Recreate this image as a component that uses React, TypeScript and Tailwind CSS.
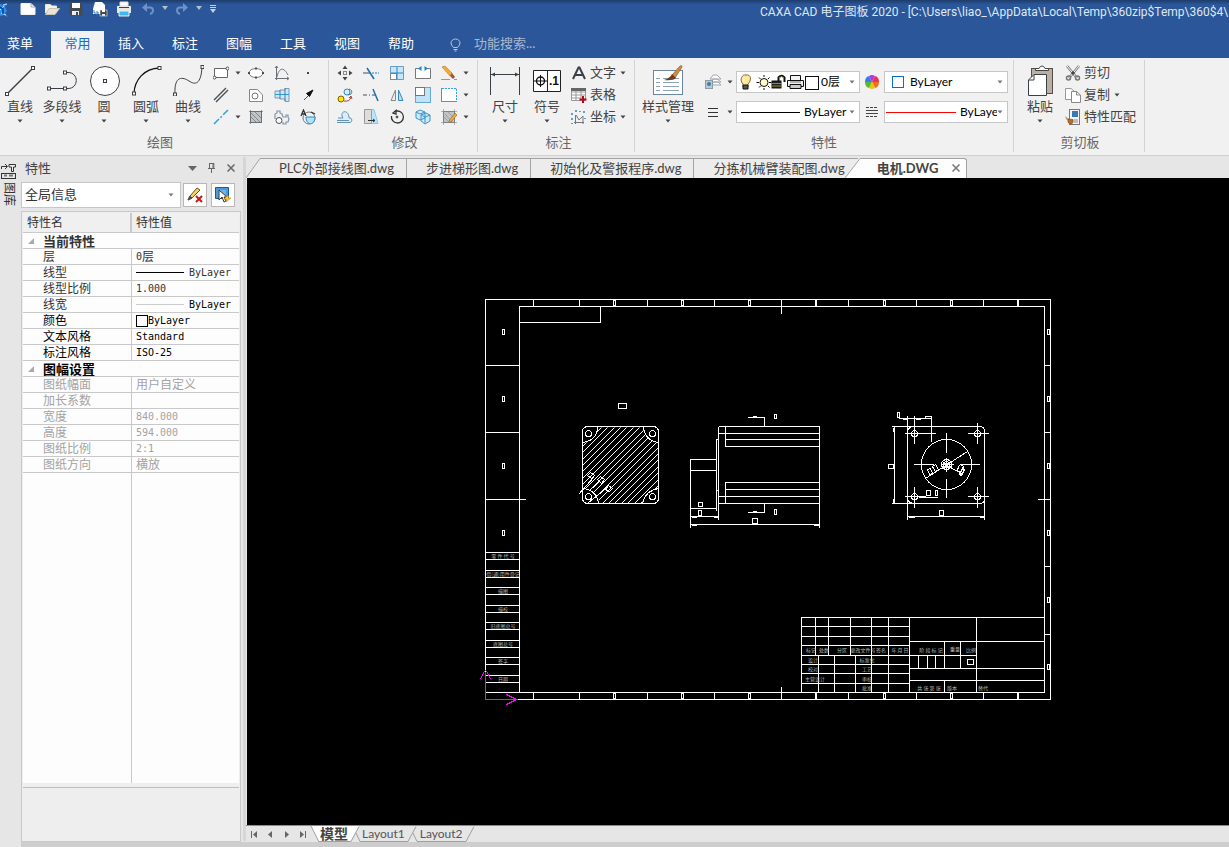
import React from "react";
import type { ReactNode } from "react";

const ui = "font-['Lato','Noto_Sans_CJK_SC',sans-serif]";

function Icon({ children, label, size = 16 }: { children: ReactNode; label?: string; size?: number }) {
  return (
    <svg width={size} height={size} viewBox={`0 0 ${size} ${size}`} fill="none" stroke="#4a4f57" aria-label={label} className="block shrink-0">
      {children}
    </svg>
  );
}

function Caret({ light = false }: { light?: boolean }) {
  return (
    <svg width="6" height="4" viewBox="0 0 6 4" className="block shrink-0">
      <path d="M.5 .5H5.5L3 3.5Z" fill={light ? "#777" : "#444"} />
    </svg>
  );
}

const node = (x: number, y: number) => <rect x={x - 1.5} y={y - 1.5} width="3" height="3" fill="#fff" stroke="#3b3f46" />;

/* ---------- quick access bar ---------- */

function QuickBar() {
  const b = "flex h-[18px] w-6 items-center justify-center";
  return (
    <div className="flex shrink-0 items-start">
      <button aria-label="CAXA" className="h-5 w-4">
        <svg width="9" height="16" viewBox="0 0 9 16" className="block">
          <path d="M0 2L3 3 7 1 5 5 7 9 5 11 8 15 4 13 0 14Z" fill="#2f8fe8" />
          <path d="M0 8L4 4M1 11L6 13M3 3L7 2" stroke="#bfe1ff" fill="none" />
          <path d="M0 5L3 7V12" stroke="#0b3f93" fill="none" strokeWidth="1.5" />
        </svg>
      </button>
      <button aria-label="新建" className={b}>
        <Icon><path d="M1 2.500H11L15 6.500V13.500H1Z" fill="#fff" stroke="#f3f3f3" /><path d="M11 2V6H15" stroke="#aaa" /></Icon>
      </button>
      <button aria-label="打开" className={b}>
        <Icon><path d="M1.500 12V3.500H6L8 5H12.500V7" fill="#f5f2ea" stroke="#ece8df" /><path d="M1.500 13.500L5 7.500H15.500L11 13.500Z" fill="#e8e4da" stroke="#c9c5bb" /></Icon>
      </button>
      <button aria-label="保存" className={b}>
        <Icon><path d="M2 2H14V14H3L2 13Z" fill="#454a52" stroke="#454a52" /><rect x="4" y="2" width="8" height="5" fill="#fff" stroke="none" /><rect x="4" y="10" width="7" height="4" fill="#e8eef5" stroke="none" /><rect x="8" y="11" width="2" height="3" fill="#454a52" stroke="none" /></Icon>
      </button>
      <button aria-label="另存为" className={b}>
        <Icon><path d="M3 1H10L13 4V13H1V8Z" fill="#fff" stroke="none" /><path d="M2 9V12H6M4.500 10L6.500 12L4.500 14" stroke="#3478bd" /><rect x="8" y="9" width="7" height="6" fill="#454a52" stroke="#fff" strokeWidth=".5" /><rect x="10" y="9" width="3" height="2" fill="#fff" stroke="none" /><rect x="10" y="13" width="3" height="2" fill="#dce8f3" stroke="none" /></Icon>
      </button>
      <button aria-label="打印" className={b}>
        <Icon><path d="M4 1H12V5H4Z" fill="#fff" stroke="#ddd" /><path d="M1 5H15V12H1Z" fill="#e6e6e6" stroke="none" /><path d="M3 6.500H13" stroke="#444" /><path d="M3 10H13V15H3Z" fill="#3db9ee" stroke="#eee" /></Icon>
      </button>
      <button aria-label="撤销" className={b}>
        <Icon><path d="M2 6.500L7 2V11Z" fill="#6f91c8" stroke="none" /><path d="M5 6.500H10Q13 6.500 13 9.500Q13 12 10 13" stroke="#6f91c8" strokeWidth="2" /></Icon>
      </button>
      <button aria-label="撤销列表" className="flex h-4 w-[10px] items-center justify-center"><svg width="6" height="4"><path d="M0 0H6L3 4Z" fill="#b7bdc9" /></svg></button>
      <button aria-label="重做" className={b}>
        <Icon><path d="M14 6.500L9 2V11Z" fill="#6f91c8" stroke="none" /><path d="M11 6.500H6Q3 6.500 3 9.500Q3 12 6 13" stroke="#6f91c8" strokeWidth="2" /></Icon>
      </button>
      <button aria-label="重做列表" className="flex h-4 w-[10px] items-center justify-center"><svg width="6" height="4"><path d="M0 0H6L3 4Z" fill="#b7bdc9" /></svg></button>
      <button aria-label="自定义" className="flex h-[18px] w-[18px] items-center justify-center"><svg width="6" height="8"><path d="M0 .5H6M0 2.500H6" stroke="#c9ced8" /><path d="M0 4H6L3 8Z" fill="#c9ced8" /></svg></button>
    </div>
  );
}

/* ---------- ribbon building blocks ---------- */

function Section({ title, className, children }: { title: string; className: string; children: ReactNode }) {
  return (
    <section className={`flex h-[92px] shrink-0 flex-col border-r border-[#d3d3d3] ${className}`}>
      <div className="flex h-[72px]">{children}</div>
      <h2 className="text-center leading-5 text-[#666]">{title}</h2>
    </section>
  );
}

function Big({ label, width = "w-10", arrow = true, children }: { label: string; width?: string; arrow?: boolean; children: ReactNode }) {
  return (
    <button className={`flex shrink-0 flex-col items-center pt-1 ${width}`}>
      <svg width="32" height="32" viewBox="0 0 32 32" fill="none" stroke="#3b3f46" className="block">{children}</svg>
      <span className="mt-[2px] mb-px leading-4 whitespace-nowrap">{label}</span>
      <span className="flex h-3 items-center">{arrow && <Caret />}</span>
    </button>
  );
}

function Tool({ name, children }: { name: string; children: ReactNode }) {
  return <button aria-label={name} className="flex items-center justify-center"><Icon>{children}</Icon></button>;
}

function Drop({ name }: { name: string }) {
  return <button aria-label={name} className="flex items-center justify-center"><Caret /></button>;
}

function TextTool({ label, arrow, children }: { label: string; arrow?: boolean; children: ReactNode }) {
  return (
    <button className="flex h-[22px] items-center gap-[3px] whitespace-nowrap">
      <Icon>{children}</Icon>
      <span className="pb-[2px]">{label}</span>
      {arrow && <span className="pl-px"><Caret /></span>}
    </button>
  );
}

function Combo({ label, value, before }: { label: string; value: string; before: ReactNode }) {
  return (
    <label className="flex h-[22px] w-[124px] items-center border border-[#c6c6c6] bg-white pr-1 text-[12px] text-black">
      {before}
      <select aria-label={label} className="min-w-0 flex-1 appearance-none bg-transparent outline-none">
        <option>{value}</option>
      </select>
      <Caret light />
    </label>
  );
}

function DrawSection() {
  return (
    <Section title="绘图" className="w-[329px] pr-2">
      <Big label="直线"><path d="M3 30L29 4" strokeWidth="1.500" />{node(3, 30)}{node(29, 4)}</Big>
      <Big label="多段线" width="w-11"><path d="M3 24.500H19H22C33 24.500 33 8.500 22 8.500H19" />{node(3, 24.5)}{node(19, 24.5)}{node(19, 8.5)}</Big>
      <Big label="圆"><circle cx="17" cy="17" r="14.500" fill="#fff" />{node(17, 17)}</Big>
      <Big label="圆弧" width="w-11"><path d="M4 29.500C4.500 16 14 4.500 29.500 4" stroke="#111" strokeWidth="1.300" />{node(4, 29.5)}{node(29.5, 4)}</Big>
      <Big label="曲线"><path d="M3 30C2 11 11 13 17 17C23 21 29 21 30 3" />{node(3, 30.5)}{node(30.5, 3)}</Big>
      <div className="grid auto-rows-[22px] grid-cols-[25px_10px_26px_26px_26px] pt-[2px]">
        <Tool name="矩形"><path d="M1.500 3.500H14.500V12.500H1.500Z" fill="#fff" stroke="#666" />{[[1.5, 12.5], [14.5, 3.5]].map(([x, y]) => <circle key={x} cx={x} cy={y} r="1.500" fill="#fff" />)}</Tool>
        <Drop name="矩形选项" />
        <Tool name="椭圆"><ellipse cx="8" cy="8" rx="7" ry="4.500" fill="#fff" stroke="#777" /><path d="M1 7v2M15 7v2M7 3.500h2M7 12.500h2" strokeWidth="2" /></Tool>
        <Tool name="公式曲线"><path d="M2.500 1V15M1 13.500H15M1 3L2.500 1L4 3M13 12L15 13.500L13 15M3 12C5 2 10 2 14 10" stroke="#6b7078" /></Tool>
        <Tool name="点"><rect x="7" y="7" width="2" height="2" fill="#444" stroke="none" /></Tool>

        <Tool name="平行线"><path d="M1 13L13 1M3 15L15 3" strokeWidth="1.400" /></Tool>
        <span />
        <Tool name="局部放大"><path d="M1.500 2.500H9.500L14.500 8V14.500H1.500Z" fill="#fff" stroke="#888" /><circle cx="7" cy="9" r="3" fill="#fff" stroke="#777" /></Tool>
        <Tool name="孔轴"><path d="M1 4H6V3H11V1.500H15V14.500H11V12H6V11H1Z" fill="#c8e7fa" stroke="#7d9bb3" /><path d="M1 7.500H15" stroke="#2b9be0" /><path d="M6 3V12M11 1V14" stroke="#567d9d" /></Tool>
        <Tool name="箭头"><path d="M4 13L9 8" /><path d="M13 3L6.500 6.500L9.500 9.500Z" fill="#111" stroke="#111" /></Tool>

        <Tool name="中心线"><path d="M1 15L15 1" stroke="#21a0db" strokeWidth="1.400" strokeDasharray="7 2 2 2" /></Tool>
        <Drop name="中心线选项" />
        <Tool name="填充"><rect x="2.500" y="2.500" width="11" height="11" fill="#c1c4c7" stroke="#6c7075" /><path d="M2.500 1V15M13.500 1V12M1 2.500H15M1 13.500H11M3 8L8 13M3 4L12 13M7 3L13 9" stroke="#6c7075" strokeWidth=".7" /></Tool>
        <Tool name="齿轮"><circle cx="5" cy="11.500" r="3" fill="#fff" /><path d="M1 10V5L3 4V2H6V4L8 5L9 8H12V6H14V8L15 10L14 13H12V15H9V13" stroke="#8196a8" strokeWidth="1.200" /></Tool>
        <Tool name="文字圆弧"><circle cx="9" cy="9" r="6" stroke="#777" /><path d="M6 8H15C15 17 6 17 6 8Z" fill="#b5e0fa" stroke="#3388b8" /><path d="M1 7L3.500 1L6 7M2 5H5M11 3L15 5" stroke="#333" strokeWidth="1.300" /></Tool>
      </div>
    </Section>
  );
}

function ModifySection() {
  return (
    <Section title="修改" className="w-[149px] pl-[3px]">
      <div className="grid auto-rows-[22px] grid-cols-[26px_26px_26px_26px_26px_8px] pt-[2px]">
        <Tool name="平移"><rect x="6.500" y="6.500" width="3" height="3" stroke="#888" /><path d="M8 2V4M8 12V14M2 8H4M12 8H14" /><path d="M8 .5L5.500 4H10.500ZM8 15.500L5.500 12H10.500ZM.5 8L4 5.500V10.500ZM15.500 8L12 5.500V10.500Z" fill="#444" stroke="none" /></Tool>
        <Tool name="裁剪"><path d="M0 8H7" /><path d="M9 8H16" stroke="#1287d3" strokeDasharray="2 1" /><path d="M4 3L11 14" stroke="#1670b5" strokeWidth="1.500" /></Tool>
        <Tool name="阵列"><path d="M1.500 1.500H14.500V14.500H1.500Z" fill="#c5e7fa" stroke="#6a9dbf" /><rect x="1.500" y="8.500" width="6" height="6" fill="#fff" stroke="#888" /><path d="M8 2V14M2 8H14" stroke="#2d88c2" /></Tool>
        <Tool name="打断"><path d="M4 3.500H.5V13.500H15.500V3.500H12" fill="#fff" stroke="#777" /><path d="M3 3.500L6.500 1V6ZM13 3.500L9.500 1V6Z" fill="#1687ce" stroke="none" /></Tool>
        <Tool name="删除"><path d="M1 2L4 1L11 8L9 11Z" fill="#f3ad35" stroke="#b46512" strokeWidth=".5" /><path d="M9 11L11 8L14 12L12 14Z" fill="#a45142" stroke="none" /><path d="M0 14.500H9M13 14.500H16" stroke="#999" /></Tool>
        <Drop name="删除选项" />

        <Tool name="平移复制"><circle cx="4" cy="12" r="3" fill="#ffe500" stroke="#786500" /><circle cx="10" cy="5" r="3" fill="#d3edfb" stroke="#3688b8" /><path d="M12 2A3 3 0 0 1 14 7L11 8" stroke="#3688b8" /><path d="M7 14Q13 15 14 10M12 11L14 9L15 12" stroke="#a3443b" /></Tool>
        <Tool name="延伸"><path d="M0 8H4M6 8H7M9 8H12" /><path d="M10 2L15 14" stroke="#1670b5" strokeWidth="1.500" /></Tool>
        <Tool name="镜像"><path d="M6.500 3V13.500H2Z" fill="#eee" stroke="#888" /><path d="M9.500 3V13.500H14Z" fill="#b4dff8" stroke="#3688b8" /></Tool>
        <Tool name="缩放"><rect x=".5" y=".5" width="15" height="15" fill="#bfe4fa" stroke="#6aa9cf" /><rect x=".5" y=".5" width="9" height="8" fill="#fff" stroke="#777" /></Tool>
        <Tool name="选择区域"><rect x=".5" y="1.500" width="15" height="13" fill="#fff" stroke="#888" /><path d="M1 1.500H15.500V14" stroke="#f1f1f1" /><path d="M1 1.500H15.500V14" stroke="#38a4dd" strokeDasharray="2 1" /></Tool>
        <Drop name="选择区域选项" />

        <Tool name="等距线"><path d="M0 13.500H13C16 13 15 8 12 9C12 1 4 1 5 7L6 9H1" fill="#d8effb" stroke="#6591ae" /><path d="M0 11.500H12" stroke="#6591ae" /></Tool>
        <Tool name="拉伸"><path d="M1.500 .5H8.500V14.500H1.500Z" fill="#ddd" stroke="#999" /><path d="M9 .5H11L15 14.500H9" fill="#bde4f9" stroke="#8cc8e8" /><path d="M5 11.500H12M10 10L12 11.500L10 13" stroke="#333" /></Tool>
        <Tool name="旋转"><path d="M6 2H8A6 6 0 1 1 2.500 7M4 4L7 1.500V5Z" stroke="#333" strokeWidth="1.300" /><circle cx="8" cy="8" r="1" fill="#333" /></Tool>
        <Tool name="分解"><path d="M1 3L5 1L10 3V9L5 11L1 9ZM6 6L11 4L15 6V12L10 15L6 12Z" fill="#cdeafa" stroke="#3c95c5" /><path d="M6 6L10 8L15 6M10 8V14M1 3L5 5L10 3" stroke="#3c95c5" /></Tool>
        <Tool name="编辑填充"><rect x="2.500" y="2.500" width="11" height="11" fill="#c1c4c7" stroke="#777" /><path d="M2.500 0V16M13.500 0V16M0 2.500H16M0 13.500H16M3 8L8 13M4 5L11 13M7 3L13 9" stroke="#888" strokeWidth=".6" /><path d="M8 12L14 4L16 6L10 13Z" fill="#f1ad36" stroke="#875d25" strokeWidth=".6" /></Tool>
        <Drop name="编辑填充选项" />
      </div>
    </Section>
  );
}

function NoteSection() {
  return (
    <Section title="标注" className="w-[157px] pl-[5px]">
      <Big label="尺寸" width="w-11"><path d="M1.500 3V31M30.500 3V31M2 10.500H30" /><path d="M2 10.500L6 8.500V12.500ZM30 10.500L26 8.500V12.500Z" fill="#3b3f46" stroke="none" /></Big>
      <Big label="符号">
        <path d="M2.500 6.500H29.500V27.500H2.500ZM16.500 6.500V27.500" fill="#fff" stroke="#222" />
        <circle cx="9.500" cy="17" r="4" stroke="#111" strokeWidth="1.400" /><path d="M3 17H16M9.500 11V23" stroke="#111" />
        <text x="18" y="21" fontSize="12" fontWeight="bold" fontFamily="Liberation Sans" fill="#111" stroke="none">.1</text>
      </Big>
      <div className="pt-[2px] pl-1">
        <TextTool label="文字" arrow><path d="M2 14L7.500 2.500H8.500L14 14M4.500 10H11.500" stroke="#3b3f46" strokeWidth="2" /></TextTool>
        <TextTool label="表格"><path d="M.5 1.500H14.500V13.500H.5ZM.5 5H14M.5 8H14M.5 11H10M5 4V13M10 4V13" fill="#fff" stroke="#999" /><path d="M0 1H15V4H0Z" fill="#666" stroke="none" /><path d="M12 9V16M8.500 12.500H15.500" stroke="#b30b18" strokeWidth="2" /></TextTool>
        <TextTool label="坐标" arrow><path d="M4.500 6V15M3 13.500H13M5 6L8 11L12 7V15" stroke="#777" /><path d="M1 4v2M5 1v2M9 2v1M13 2v2M1 9v2M1 14v1M14 9v1" stroke="#2486bd" strokeWidth="1.500" /></TextTool>
      </div>
    </Section>
  );
}

function LayerIcons() {
  return (
    <svg width="84" height="18" viewBox="0 0 84 18" fill="none" stroke="#111" className="block shrink-0">
      <path d="M6 11C2 7 5 1 9 2C14 1 15 7 11 11V14H6Z" fill="#ffe69a" stroke="#806a37" /><path d="M6 12H11V16H6Z" fill="#555" /><path d="M7 5V9" stroke="#fff" />
      <circle cx="27" cy="9.500" r="4" fill="#fff8c7" /><path d="M27 2V4M27 15V17M19.500 9.500H22M32 9.500H34.500M22 4.500L23.500 6M31 13L32.500 14.500M22 14.500L23.500 13M31 6L32.500 4.500" />
      <rect x="35" y="8" width="9" height="7" fill="#222" /><path d="M35 10.500H44M35 13H44" stroke="#938d26" /><path d="M41.500 8V4.500Q44.500 1 47.500 4.500V9" strokeWidth="2" /><path d="M42 5Q44.500 2 47 5" stroke="#938d26" />
      <path d="M53.500 7V2.500H63.500V7M50.500 7.500H66.500V13.500H50.500Z" fill="#f2f2f2" /><path d="M53 11.500H64V15.500H53Z" fill="#ccc" /><path d="M53 9H64" stroke="#777" />
      <rect x="68.500" y="3.500" width="13" height="13" fill="#fff" />
    </svg>
  );
}

function PropertySection() {
  return (
    <Section title="特性" className="w-[379px]">
      <Big label="样式管理" width="w-[66px]">
        <rect x="1.500" y="6.500" width="29" height="24" fill="#fff" stroke="#6c87a3" />
        <path d="M4 14.500H8M4 18.500H8M4 22.500H8M4 26.500H8M11 14.500H27M11 18.500H27M11 22.500H27M11 26.500H27" stroke="#8ba2b9" />
        <path d="M20 11L27 3Q30 0 30 3L23 14Z" fill="#ce8b45" stroke="#995a25" strokeWidth=".7" /><path d="M20 10L24 14Q21 17 12 16Q18 14 20 10Z" fill="#6a4025" stroke="none" />
      </Big>
      <div className="flex flex-col gap-2 pt-[11px] pl-1">
        <div className="flex items-center">
          <Tool name="图层"><path d="M5 5L8 1H12L16 5H9ZM5 7L9 5H12L16 8H9ZM6 10L9 8H13L16 11H9Z" fill="#fff" stroke="#a3a8ae" /><rect x=".5" y="6.500" width="7" height="8" fill="#b7c8d6" stroke="#8c9ba6" /><circle cx="4" cy="10" r="2" fill="#3e7ba2" stroke="none" /></Tool>
          <button aria-label="图层选项" className="flex w-[15px] justify-center pl-[3px]"><Caret /></button>
          <Combo label="图层" value="0层" before={<LayerIcons />} />
          <button aria-label="颜色" className="flex w-6 justify-center">
            <svg width="14" height="14" viewBox="-7 -7 14 14" className="block">
              <path d="M0 0L-3 -6Q0 -8 3 -6Z" fill="#b934e2" /><path d="M0 0L3 -6Q7 -5 7 0Z" fill="#f43050" /><path d="M0 0H7Q7 5 3 6Z" fill="#f26b22" /><path d="M0 0L3 6Q0 8 -3 6Z" fill="#eac30d" /><path d="M0 0L-3 6Q-7 5 -7 0Z" fill="#56ba32" /><path d="M0 0H-7Q-7 -5 -3 -6Z" fill="#3a79ee" />
            </svg>
          </button>
          <Combo label="颜色" value="ByLayer" before={<span className="mr-[6px] ml-[7px] h-3 w-3 shrink-0 border border-[#0870cc]" />} />
        </div>
        <div className="flex items-center">
          <Tool name="线型"><path d="M3 4.500H13M3 8.500H13M3 12.500H13" stroke="#333" /></Tool>
          <button aria-label="线型选项" className="flex w-[15px] justify-center pl-[3px]"><Caret /></button>
          <Combo label="线型" value="ByLayer" before={<span className="mr-1 ml-1 h-px w-[59px] shrink-0 bg-black" />} />
          <button aria-label="线宽" className="flex w-6 justify-center"><Icon><path d="M2 3.500H14M2 12.500H14" stroke="#444" strokeDasharray="3 1" /><path d="M2 6.500H14M2 9.500H14" stroke="#444" /></Icon></button>
          <Combo label="线宽" value="ByLayer" before={<span className="mr-1 ml-px h-px w-[70px] shrink-0 bg-[#f00]" />} />
        </div>
      </div>
    </Section>
  );
}

function ClipboardSection() {
  return (
    <Section title="剪切板" className="w-[131px] pl-[2px]">
      <Big label="粘贴" width="w-12">
        <rect x="7.500" y="4.500" width="21" height="25" fill="#b9afa3" stroke="#554f49" /><path d="M11.500 6.500V4.500H15Q16 2 18 2Q20 2 21 4.500H24.500V6.500Z" fill="#fff" stroke="#444" /><path d="M4.500 16L10 10.500H22.500V31.500H4.500Z" fill="#fff" /><path d="M10 11V16H5" />
      </Big>
      <div className="pt-[2px] pl-px">
        <TextTool label="剪切"><path d="M2 1L12 13M14 1L4 13" stroke="#777" strokeWidth="2.500" /><path d="M2 1L12 13M14 1L4 13" stroke="#fff" /><circle cx="3.500" cy="13" r="2" stroke="#777" strokeWidth="1.500" /><circle cx="12.500" cy="13" r="2" stroke="#777" strokeWidth="1.500" /><path d="M6 8L8 6L10 8L8 10Z" fill="#444" stroke="none" /></TextTool>
        <TextTool label="复制" arrow><path d="M.5 1.500H6L9.500 4.500V12.500H.5Z" fill="#fff" stroke="#999" /><path d="M6.500 4.500H11.500L15.500 8V15.500H6.500Z" fill="#fff" stroke="#888" /><path d="M11.500 4.500V8H15" stroke="#888" /></TextTool>
        <TextTool label="特性匹配"><rect x="4.500" y=".5" width="10" height="15" fill="#f5f5f5" stroke="#777" /><rect x="7" y="2" width="6" height="6" fill="#3a79b4" stroke="none" /><path d="M9 11H13M9 13H13" stroke="#888" /><path d="M0 7L4 10Q2 12 1 10Z" fill="#c99a6a" stroke="none" /><path d="M3 10L8 10.500Q9 15 5 15Q2 14 3 10Z" fill="#b56d2b" stroke="#80451c" strokeWidth=".6" /></TextTool>
      </div>
    </Section>
  );
}

/* ---------- property panel ---------- */

type Row = { name: string; value?: ReactNode; tone: string };
const mono = "font-['DejaVu_Sans_Mono',monospace] text-[10px] leading-none";

const current: Row[] = [
  { name: "层", value: <><span className={mono}>0</span>层</>, tone: "text-[#333]" },
  { name: "线型", value: <><i className="mr-[5px] h-px w-12 bg-black" /><span className={mono}>ByLayer</span></>, tone: "text-[#333]" },
  { name: "线型比例", value: <span className={mono}>1.000</span>, tone: "text-[#333]" },
  { name: "线宽", value: <><i className="mr-[5px] h-px w-12 bg-[#ccc]" /><span className={`text-black ${mono}`}>ByLayer</span></>, tone: "text-[#333]" },
  { name: "颜色", value: <><i className="h-3 w-3 shrink-0 border border-black" /><span className={mono}>ByLayer</span></>, tone: "text-black" },
  { name: "文本风格", value: <span className={mono}>Standard</span>, tone: "text-black" },
  { name: "标注风格", value: <span className={mono}>ISO-25</span>, tone: "text-black" },
];
const sheet: Row[] = [
  { name: "图纸幅面", value: "用户自定义", tone: "text-[#a3a3a3]" },
  { name: "加长系数", tone: "text-[#a3a3a3]" },
  { name: "宽度", value: <span className={mono}>840.000</span>, tone: "text-[#a3a3a3]" },
  { name: "高度", value: <span className={mono}>594.000</span>, tone: "text-[#a3a3a3]" },
  { name: "图纸比例", value: <span className={mono}>2:1</span>, tone: "text-[#a3a3a3]" },
  { name: "图纸方向", value: "横放", tone: "text-[#a3a3a3]" },
];

function Group({ title, rows, tone }: { title: string; rows: Row[]; tone: string }) {
  return (
    <tbody>
      <tr>
        <th colSpan={2} scope="rowgroup" className={`h-4 border-b border-[#c9c9c9] p-0 text-left text-[13px] font-bold ${tone}`}>
          <span className="flex h-[15px] items-center overflow-hidden">
            <svg width="20" height="8" viewBox="0 0 20 8" className="block"><path d="M11 1V7H5Z" fill="#aaa" /></svg>
            {title}
          </span>
        </th>
      </tr>
      {rows.map((r) => (
        <tr key={r.name} className={r.tone}>
          <th scope="row" className="h-4 border-r border-b border-[#c9c9c9] p-0 pl-5 text-left font-normal">
            <span className="flex h-[15px] items-center leading-none">{r.name}</span>
          </th>
          <td className="h-4 border-b border-[#c9c9c9] p-0 pl-1 whitespace-nowrap">
            <span className="flex h-[15px] items-center leading-none">{r.value}</span>
          </td>
        </tr>
      ))}
    </tbody>
  );
}

function PropertyPanel() {
  return (
    <aside className="flex w-[220px] shrink-0 flex-col">
      <header className="flex h-6 items-center pl-1 text-[#444]">
        <h2 className="flex-1">特性</h2>
        <button aria-label="菜单" className="flex w-[19px] justify-center"><svg width="9" height="5"><path d="M0 0H9L4.500 5Z" fill="#666" /></svg></button>
        <button aria-label="固定" className="flex w-[19px] justify-center"><svg width="9" height="10" viewBox="0 0 9 10" fill="none" stroke="#666"><path d="M2 .5H7M2.500 .5V5.500M6 0V5M6.800 0V5M1 5.500H8M4.500 6V10" /></svg></button>
        <button aria-label="关闭" className="mr-px flex w-[19px] justify-center"><svg width="8" height="8"><path d="M.5 .5L7.500 7.500M7.500 .5L.5 7.500" stroke="#666" strokeWidth="1.500" /></svg></button>
      </header>
      <div className="flex items-center pt-[2px]">
        <label className="mr-[2px] flex h-[26px] w-[160px] items-center border border-[#c6c6c6] bg-white pr-[6px] pl-[3px]">
          <select aria-label="选择对象" className="min-w-0 flex-1 appearance-none bg-transparent pb-[2px] text-[#333] outline-none"><option>全局信息</option></select>
          <Caret light />
        </label>
        <button aria-label="清除选择" className="mr-1 flex h-6 w-6 items-center justify-center border border-[#b8b8b8] bg-white">
          <Icon><path d="M1 13L3 9L10 1L13 3L5 11Z" fill="#f4d65b" stroke="#654e2f" /><path d="M1 13L3 9L5 11Z" fill="#444" /><path d="M9 9L15 15M15 9L9 15" stroke="#c81616" strokeWidth="2" /></Icon>
        </button>
        <button aria-label="快速选择" className="flex h-6 w-6 items-center justify-center border border-[#b8b8b8] bg-white">
          <Icon><path d="M.5 .5H13.500V11.500H.5Z" fill="#4c9ad7" stroke="#155c96" /><path d="M3 3H11V9H3Z" fill="#70b5e6" stroke="none" /><path d="M4 3V13L7 10L9 15L11 14L9 10H12Z" fill="#fff" stroke="#333" /><path d="M12 9L9 12H12L11 15L16 11H13L14 9Z" fill="#fecc37" stroke="#a9772c" strokeWidth=".5" /></Icon>
        </button>
      </div>
      <div className="mt-[3px] flex min-h-0 flex-1 flex-col border border-[#c9c9c9] bg-[#eee] p-px">
        <table className="w-full table-fixed border-separate border-spacing-0 bg-[#fdfdfd] text-[12px]">
          <colgroup><col className="w-[109px]" /><col /></colgroup>
          <thead>
            <tr className="bg-[#f0f0f0] text-[#333]">
              <th className="h-5 border-r-2 border-b border-[#c9c9c9] p-0 pl-1 text-left leading-[18px] font-normal">特性名</th>
              <th className="h-5 border-b border-[#c9c9c9] p-0 pl-1 text-left leading-[18px] font-normal">特性值</th>
            </tr>
          </thead>
          <Group title="当前特性" rows={current} tone="text-[#333]" />
          <Group title="图幅设置" rows={sheet} tone="text-black" />
        </table>
        <div className="flex min-h-0 flex-1 bg-[#fdfdfd]"><div className="w-[109px] border-r border-[#c9c9c9]" /></div>
        <div className="mt-1 h-[53px] shrink-0 border-t border-[#bdbdbd]" />
      </div>
    </aside>
  );
}

/* ---------- drawing canvas ---------- */

type Box = [number, number, number, number];
const topTicks = [533, 579, 647, 714, 815, 816, 848, 916, 983, 1017, 1018];
const topBoxes = [613, 681, 748, 883, 950];
const zoneRows = [329, 396, 463, 530];
const sideNotes: [number, string][] = [
  [552, "零 件 代 号"], [570, "借(通)用件登记"], [587, "描图"], [605, "描校"],
  [622, "旧底图总号"], [640, "底图总号"], [657, "签字"], [675, "日期"],
];
const blockNotes: [number, number, string][] = [
  [811, 652, "标记"], [824, 652, "处数"], [842, 652, "分区"], [863, 652, "更改文件号"], [881, 652, "签名"], [900, 652, "年 月 日"],
  [813, 662, "设计"], [867, 662, "标准化"], [813, 671, "校对"], [867, 671, "工艺"], [815, 681, "主管设计"], [867, 681, "审核"], [867, 690, "批准"],
  [931, 652, "阶 段 标 记"], [955, 651, "重量"], [971, 652, "比例"], [929, 690, "共 张 第 张"], [952, 690, "版本"], [983, 690, "替代"],
];
const smallBoxes: Box[] = [
  [618, 403, 8, 5], [774, 414, 2, 4], [774, 509, 2, 5], [698, 502, 4, 4], [698, 510, 3, 5], [752, 518, 5, 5],
  [888, 464, 5, 4], [939, 510, 4, 5], [897, 412, 2, 5], [925, 416, 6, 2], [926, 490, 4, 5], [935, 490, 2, 5], [967, 659, 6, 5],
];
const holes = [[588, 433], [652, 433], [588, 496], [652, 496], [914, 433], [977, 433], [914, 496], [977, 496]];
const hatch = Array.from({ length: 26 }, (_, i) => 512 + Math.round(i * 6.4));

function Drawing() {
  return (
    <svg viewBox="247 178 982 647" className="block h-full w-full bg-black" fill="none" stroke="#fff" shapeRendering="crispEdges" role="img" aria-label="电机">
      <defs>
        <clipPath id="face"><path d="M597 427H643Q643 437 650 439L658 443V489Q649 489 646 493L641 503H599Q597 491 589 490L582 488V443Q594 440 595 436Z" /></clipPath>
      </defs>
      <g transform="translate(.5 .5)">
        {/* sheet frame */}
        <path d="M485 299H1050V699H485ZM519 692V306H1044V692H485M519 322H600V306M485 365H519M485 432H519M485 499H525M1044 365H1050M1044 432H1050M1037 499H1050M1044 566H1050M1044 634H1050M781 299V313M781 686V699" />
        <path d={topTicks.map((x) => `M${x} 299V306M${x} 692V699`).join("")} />
        {topBoxes.map((x) => <path key={x} d={`M${x} 300H${x + 2}V305H${x}ZM${x} 693H${x + 2}V698H${x}Z`} />)}
        {zoneRows.map((y) => <rect key={y} x="502" y={y} width="2" height="5" />)}
        {[...zoneRows, 597, 664].map((y) => <rect key={y} x="1047" y={y} width="2" height="5" />)}
        <path d={sideNotes.map(([y]) => `M485 ${y}H519M485 ${y + 7}H519`).join("")} />

        {/* end face */}
        <rect x="582" y="426" width="76" height="77" rx="5" />
        <path d="M597 426Q597 440 582 442M643 426Q644 440 658 442M582 488Q596 489 598 503M658 488Q645 490 642 503" />
        <g clipPath="url(#face)"><path d={hatch.map((x) => `M${x} 503L${x + 77} 426`).join("")} /></g>
        <path d="M578 494L593 477M588 502L608 486M590 472l4 3-3 3-4-3ZM600 476l4 3-3 4-4-4ZM608 485l4 3-3 3-4-2ZM592 488L601 478" />

        {/* side elevation */}
        <path d="M718 426H819V527M718 426V519M718 503H819M718 433H819M725 426V446M725 439H819M725 446H819M725 503V482H819M725 489H819M718 496H819M718 439H716V510M716 490H718M716 459H690V527M690 470H716M690 508H716M690 516H718M690 524H819M747 417H764V426M752 416H756M747 512H764V503M752 511H756M691 517H696M713 517H718M691 525H696M813 525H818" />

        {/* flange view */}
        <path d="M907 415V519M984 431V519M891 426H979Q984 426 984 431M891 503H979Q984 503 984 498M907 432Q907 427 912 426M907 498Q908 503 914 503M894 426V503M893 427V431M893 498V502M907 516H984M908 517H914M979 517H984M898 418H924M902 419H907M915 419H920M914 415V443M931 416V441M904 433H935M967 433H988M977 422V443M904 496H925M914 486V507M918 497H937M967 496H988M977 486V507" />
        <circle cx="946" cy="464" r="25" /><circle cx="946" cy="464" r="5" /><circle cx="946" cy="464" r="3" />
        <path d="M913 464H933M941 464H953M959 464H979M946 432V452M946 457V471M946 478V497M925 478L967 451M950 467L963 474M927 469l3-1 2 5-3 1ZM932 466l3-2 3 5-3 2ZM958 466l2-2 3 2-3 6-3-2ZM962 468l2 1-3 6-2-1ZM942 461L950 468M942 468L950 461" />
        {holes.map(([x, y]) => <circle key={`${x}-${y}`} cx={x} cy={y} r="3" />)}
        {smallBoxes.map(([x, y, w, h]) => <rect key={`${x}-${y}`} x={x} y={y} width={w} height={h} />)}

        {/* title block */}
        <path d="M801 692V617H1044M801 626H909M801 636H909M801 645H909M801 655H976M801 664H909M801 673H909M801 683H909M909 617V692M976 617V692M909 641H1044M909 668H1044M909 680H1044M815 617V655M828 617V655M850 617V655M871 617V692M888 617V692M818 655V692M834 655V692M855 655V692M944 641V668M944 680V692M960 641V668M918 655V668M927 655V668M935 655V668" />

        {/* coordinate origin */}
        <path d="M485 671V699H516M480 679L483 672L485 670L487 672L490 679M506 694L514 698L516 699L514 700L506 704" stroke="#f0f" />
      </g>
      <g stroke="none" fill="#b8b8b0" fontSize="5" textAnchor="middle" fontFamily="'Noto Sans CJK SC', sans-serif">
        {sideNotes.map(([y, t]) => <text key={y} x="503" y={y + 6}>{t}</text>)}
        {blockNotes.map(([x, y, t]) => <text key={`${x}-${y}`} x={x} y={y}>{t}</text>)}
      </g>
    </svg>
  );
}

/* ---------- document and layout tabs ---------- */

function DocTabs() {
  const tab = "flex h-5 items-center border-t border-r border-[#a3a3a3] bg-[#ececec] pr-3 pb-px pl-[19px] whitespace-nowrap";
  return (
    <nav className="flex h-[22px] shrink-0 items-end overflow-hidden text-[#444]">
      <svg width="14" height="20" className="block shrink-0"><path d="M0 20L14 0V20Z" fill="#ececec" /><path d="M0 20L14 .5" stroke="#a3a3a3" /></svg>
      <button className={tab}>PLC外部接线图.dwg</button>
      <button className={tab}>步进梯形图.dwg</button>
      <button className={tab}>初始化及警报程序.dwg</button>
      <button className="flex h-5 items-center border-t border-[#a3a3a3] bg-[#ececec] pb-px pl-[19px] whitespace-nowrap">分拣机械臂装配图.dwg</button>
      <svg width="15" height="20" className="block shrink-0 bg-[#ececec]"><path d="M0 20L15 0V20Z" fill="#fdfdfd" /><path d="M0 .5H13M0 20L15 .5" stroke="#a3a3a3" fill="none" /></svg>
      <div className="flex h-5 items-center rounded-tr-[3px] border-t border-r border-[#a3a3a3] bg-[#fdfdfd] pb-px pl-[17px]">
        <button className="font-bold whitespace-nowrap">电机.DWG</button>
        <button aria-label="关闭文档" className="ml-2 flex w-5 justify-center"><svg width="8" height="8"><path d="M.5 .5L7.500 7.500M7.500 .5L.5 7.500" stroke="#777" strokeWidth="1.500" /></svg></button>
      </div>
    </nav>
  );
}

function Slash() {
  return <svg width="15" height="16" className="block shrink-0"><path d="M0 15.500H3L11 .5M8 7L12 15.500H15" stroke="#a0a0a0" fill="none" /></svg>;
}

function LayoutTabs() {
  const nav = "flex w-4 items-center justify-center";
  const tab = "border-b border-[#a0a0a0] text-[12px] leading-[14px]";
  return (
    <nav className="flex h-[17px] shrink-0 border-t border-[#8a8a8a] text-[#555]">
      <div className="flex">
        <button aria-label="第一个" className={nav}><svg width="7" height="7"><path d="M.5 0V7" stroke="#666" /><path d="M6 0V7L2 3.500Z" fill="#666" /></svg></button>
        <button aria-label="上一个" className={nav}><svg width="5" height="7"><path d="M4 0V7L0 3.500Z" fill="#666" /></svg></button>
        <button aria-label="下一个" className={nav}><svg width="5" height="7"><path d="M1 0V7L5 3.500Z" fill="#666" /></svg></button>
        <button aria-label="最后一个" className={nav}><svg width="7" height="7"><path d="M6.500 0V7" stroke="#666" /><path d="M1 0V7L5 3.500Z" fill="#666" /></svg></button>
      </div>
      <svg width="9" height="16" className="block shrink-0"><path d="M1 0L9 15V0Z" fill="#fff" /><path d="M1 0L9 16" stroke="#a0a0a0" /></svg>
      <button className="border-b border-[#a0a0a0] bg-white px-px text-[14px] leading-[13px] font-bold text-[#444]">模型</button>
      <svg width="13" height="16" className="block shrink-0"><path d="M0 0H10L2 15H0Z" fill="#fff" /><path d="M0 15.500H2L10 .5M7 7L11 15.500H13" stroke="#a0a0a0" fill="none" /></svg>
      <button className={tab}>Layout1</button>
      <Slash />
      <button className={tab}>Layout2</button>
      <svg width="15" height="16" className="block shrink-0"><path d="M0 15.500H3L11 .5" stroke="#a0a0a0" fill="none" /></svg>
    </nav>
  );
}

const menus = ["插入", "标注", "图幅", "工具", "视图", "帮助"];

export default function App() {
  return (
    <div className={`flex h-screen flex-col overflow-hidden bg-[#e6e6e6] text-[13px] leading-5 text-[#444] ${ui}`}>
      <header className="shrink-0 bg-[#2b579a] text-white">
        <div className="flex h-[31px] bg-linear-to-b from-[#1d3c6c] to-[#2b579a] to-15%">
          <QuickBar />
          <h1 className="ml-auto w-[469px] pt-[2px] font-['Roboto','Noto_Sans_CJK_SC',sans-serif] text-[12px] whitespace-nowrap text-[#dfe7f3]">
            CAXA CAD 电子图板 2020 - [C:\Users\liao_\AppData\Local\Temp\360zip$Temp\360$4\电
          </h1>
        </div>
        <nav className="flex h-[27px] items-stretch">
          <button className="w-[51px] pr-[11px] pb-[3px]">菜单</button>
          <button className="w-[53px] bg-[#f1f1f1] pb-[3px] text-[#1b6ac9]">常用</button>
          {menus.map((m) => <button key={m} className="w-[54px] pb-[3px]">{m}</button>)}
          <label className="flex items-center pl-[22px]">
            <svg width="11" height="14" viewBox="0 0 11 14" fill="none" stroke="#b6c4da" className="mr-[13px] block"><path d="M3.500 9.500Q1 7 1 5A4.500 4 0 0 1 10 5Q10 7 7.500 9.500ZM3.500 11.500H7.500M4.500 13H6.500" /></svg>
            <input type="text" aria-label="功能搜索" placeholder="功能搜索..." className="w-24 bg-transparent pb-[3px] outline-none placeholder:text-[#a9b7cf]" />
          </label>
        </nav>
      </header>

      <div className="flex h-[98px] shrink-0 overflow-hidden border-b border-[#d0d0d0] bg-[#f1f1f1] pt-[2px]">
        <DrawSection />
        <ModifySection />
        <NoteSection />
        <PropertySection />
        <ClipboardSection />
      </div>

      <div className="flex min-h-0 flex-1">
        <div className="w-[21px] shrink-0 pt-[7px]">
          <button className="flex flex-col items-center gap-[3px] pl-px text-[#333]">
            <svg width="15" height="16" viewBox="0 0 15 16" fill="none" stroke="#333"><path d="M.5 6V3.500H6M4 1L6.500 3.500L4 6M8 1.500H14.500V4H12.500V8.500H10.500V4H8Z" fill="#eee" /><rect x=".5" y="10.500" width="14" height="5" /><path d="M3 12.500H6M8 12.500H12" strokeWidth="2" stroke="#777" /></svg>
            <span className="text-[12px] leading-[14px] [text-orientation:sideways] [writing-mode:vertical-rl]">图库</span>
          </button>
        </div>
        <div className="flex min-w-0 flex-1 flex-col">
          <div className="flex min-h-0 flex-1">
            <PropertyPanel />
            <div className="my-px ml-[2px] w-[3px] shrink-0 bg-[#d6d6d6]" />
            <main className="flex min-w-0 flex-1 flex-col">
              <DocTabs />
              <div className="ml-px min-h-0 flex-1"><Drawing /></div>
              <LayoutTabs />
            </main>
          </div>
          <div className="h-[5px] shrink-0 bg-[#cdcdcd]" />
        </div>
      </div>
    </div>
  );
}
